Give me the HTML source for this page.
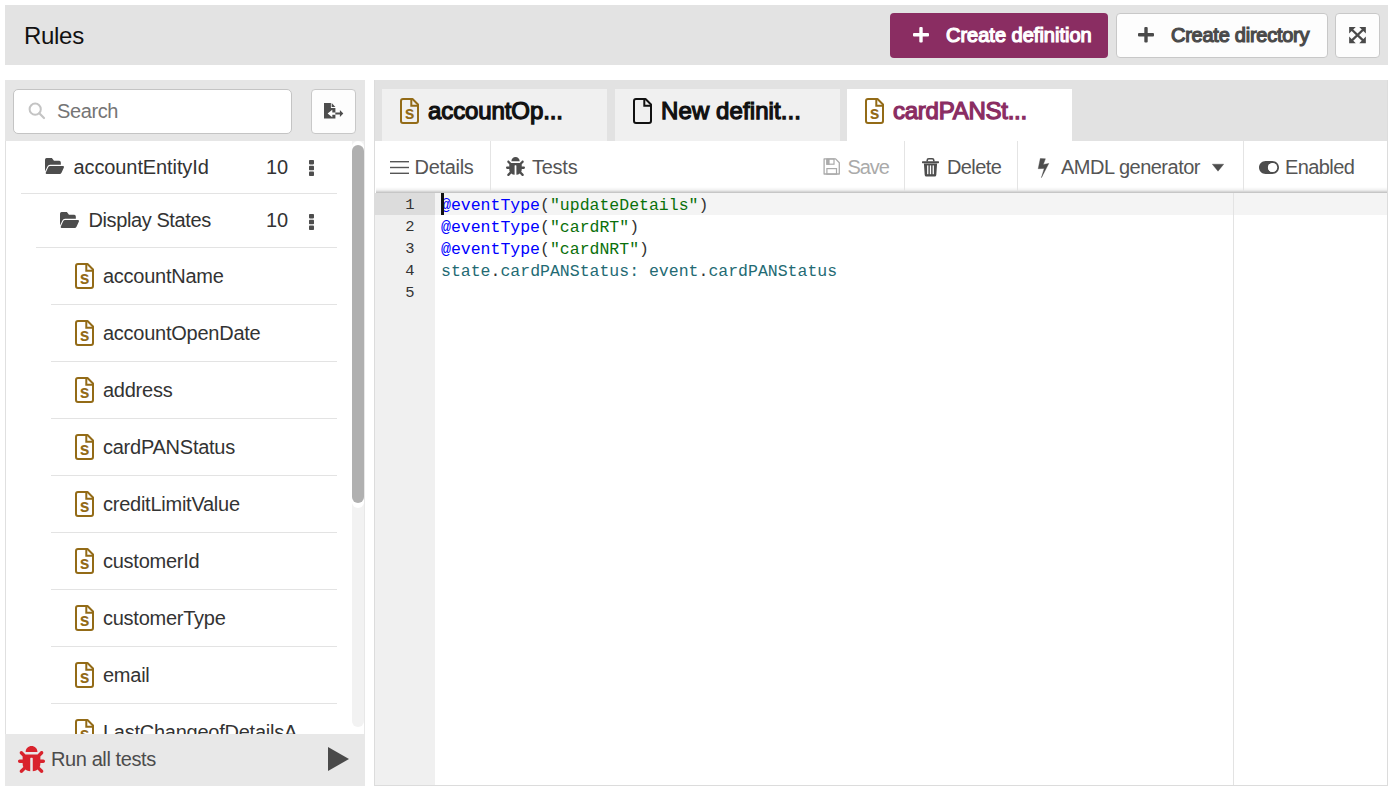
<!DOCTYPE html>
<html><head><meta charset="utf-8">
<style>
*{box-sizing:border-box;margin:0;padding:0}
html,body{width:1389px;height:786px;overflow:hidden;background:#fff;font-family:"Liberation Sans",sans-serif;position:relative}
.a{position:absolute}
.t{position:absolute;line-height:1;white-space:nowrap}
svg{position:absolute;display:block;overflow:visible}
</style></head><body>
<div class="a" style="left:5px;top:5px;width:1383px;height:60px;background:#e3e3e3;"></div>
<div class="t" style="left:24px;top:23.68px;font-size:24px;color:#111;letter-spacing:-0.3px">Rules</div>
<div class="a" style="left:890px;top:13px;width:218px;height:45px;background:#8a2d62;border-radius:4px"></div>
<svg style="left:912.8px;top:26.6px" width="16" height="15.6" viewBox="0 0 16 15.6"><rect x="6.3" y="0" width="3.4" height="15.6" rx="1" fill="#fff"/><rect x="0" y="6.1" width="16" height="3.4" rx="1" fill="#fff"/></svg>
<div class="t" style="left:946px;top:25.07px;font-size:20px;color:#fff;-webkit-text-stroke:1.2px #fff;letter-spacing:0px">Create definition</div>
<div class="a" style="left:1116px;top:13px;width:212px;height:45px;background:#fdfdfd;border:1px solid #c8c8c8;border-radius:4px"></div>
<svg style="left:1138px;top:26.6px" width="16" height="15.6" viewBox="0 0 16 15.6"><rect x="6.3" y="0" width="3.4" height="15.6" rx="1" fill="#4a4a4a"/><rect x="0" y="6.1" width="16" height="3.4" rx="1" fill="#4a4a4a"/></svg>
<div class="t" style="left:1171px;top:25.07px;font-size:20px;color:#4a4a4a;-webkit-text-stroke:1.2px #4a4a4a;letter-spacing:-0.25px">Create directory</div>
<div class="a" style="left:1335px;top:13px;width:45px;height:45px;background:#fdfdfd;border:1px solid #c8c8c8;border-radius:4px"></div>
<svg style="left:1349.3px;top:26.9px" width="17" height="16.2" viewBox="0 0 16.7 16.2"><path d="M0 0H6.6L0 6.6Z M16.7 0H10.1L16.7 6.6Z M0 16.2H6.6L0 9.6Z M16.7 16.2H10.1L16.7 9.6Z" fill="#4a4a4a"/><path d="M2 2L14.7 14.2M14.7 2L2 14.2" stroke="#4a4a4a" stroke-width="2.3"/></svg>
<div class="a" style="left:5px;top:80px;width:360px;height:706px;background:#e6e6e6;"></div>
<div class="a" style="left:13px;top:89px;width:279px;height:45px;background:#fff;border:1px solid #c4c4c4;border-radius:5px"></div>
<svg style="left:28px;top:102px" width="18" height="18" viewBox="0 0 18 18"><circle cx="7.2" cy="7.2" r="5.6" fill="none" stroke="#c4c4c4" stroke-width="2"/><line x1="11.3" y1="11.3" x2="16" y2="16" stroke="#c4c4c4" stroke-width="2.2" stroke-linecap="round"/></svg>
<div class="t" style="left:57px;top:101.07px;font-size:20px;color:#757575;letter-spacing:-0.4px">Search</div>
<div class="a" style="left:311px;top:89px;width:45px;height:45px;background:#fdfdfd;border:1px solid #c8c8c8;border-radius:4px"></div>
<svg style="left:324px;top:103px" width="20" height="16" viewBox="0 0 20 16"><path d="M0 0H6.9V4.9H11.4V15.4H0Z" fill="#4d4d4d"/><path d="M7.7 0L11.4 3.9H7.7Z" fill="#4d4d4d"/><path d="M3.6 10.5L8.3 6.8V9.4H11.6V11.7H8.3V14.2Z" fill="#fff"/><path d="M11.4 9.6H15.9V6.9L19.3 10.5L15.9 14.1V11.5H11.4Z" fill="#4d4d4d"/></svg>
<div class="a" style="left:5px;top:141px;width:360px;height:593px;background:#fff;border-left:1px solid #e0e0e0;border-right:1px solid #e8e8e8"></div>
<div class="a" style="left:0;top:141px;width:352px;height:593px;overflow:hidden"><div class="a" style="left:0;top:-141px;width:352px;height:900px">
<svg style="left:45px;top:158px" width="19" height="16" viewBox="0 64 576 384" preserveAspectRatio="none"><path fill="#4d4d4d" d="M572.694 292.093L500.27 416.248A63.997 63.997 0 0 1 444.989 448H45.025c-18.523 0-30.064-20.093-20.731-36.093l72.424-124.155A64 64 0 0 1 152 256h399.964c18.523 0 30.064 20.093 20.73 36.093zM152 224h328v-48c0-26.51-21.49-48-48-48H272l-64-64H48C21.49 64 0 85.490 0 112v278.046l69.077-118.418C86.214 242.25 117.989 224 152 224z"/></svg>
<div class="t" style="left:73.5px;top:157.07px;font-size:20px;color:#333;letter-spacing:-0.1px">accountEntityId</div>
<div class="t" style="left:266px;top:157.07px;font-size:20px;color:#333;">10</div>
<svg style="left:309px;top:160px" width="5" height="16" viewBox="0 0 5 16"><rect x="0" y="0" width="5" height="4.4" rx="0.8" fill="#4d4d4d"/><rect x="0" y="5.8" width="5" height="4.4" rx="0.8" fill="#4d4d4d"/><rect x="0" y="11.6" width="5" height="4.4" rx="0.8" fill="#4d4d4d"/></svg>
<div class="a" style="left:21px;top:193px;width:316px;height:1px;background:#e3e3e3;"></div>
<svg style="left:60px;top:212px" width="19" height="16" viewBox="0 64 576 384" preserveAspectRatio="none"><path fill="#4d4d4d" d="M572.694 292.093L500.27 416.248A63.997 63.997 0 0 1 444.989 448H45.025c-18.523 0-30.064-20.093-20.731-36.093l72.424-124.155A64 64 0 0 1 152 256h399.964c18.523 0 30.064 20.093 20.73 36.093zM152 224h328v-48c0-26.51-21.49-48-48-48H272l-64-64H48C21.49 64 0 85.490 0 112v278.046l69.077-118.418C86.214 242.25 117.989 224 152 224z"/></svg>
<div class="t" style="left:88.5px;top:210.07px;font-size:20px;color:#333;letter-spacing:-0.4px">Display States</div>
<div class="t" style="left:266px;top:210.07px;font-size:20px;color:#333;">10</div>
<svg style="left:309px;top:214px" width="5" height="16" viewBox="0 0 5 16"><rect x="0" y="0" width="5" height="4.4" rx="0.8" fill="#4d4d4d"/><rect x="0" y="5.8" width="5" height="4.4" rx="0.8" fill="#4d4d4d"/><rect x="0" y="11.6" width="5" height="4.4" rx="0.8" fill="#4d4d4d"/></svg>
<div class="a" style="left:36px;top:247px;width:301px;height:1px;background:#e3e3e3;"></div>
<svg style="left:75px;top:263px" width="19" height="26" viewBox="0 0 19 26"><path d="M3 1H12.5L18 6.5V23A2 2 0 0 1 16 25H3A2 2 0 0 1 1 23V3A2 2 0 0 1 3 1Z" fill="none" stroke="#936b17" stroke-width="2" stroke-linejoin="round"/><path d="M11.3 1.5V7.7H17.5" fill="none" stroke="#936b17" stroke-width="2"/><text x="9.7" y="21.4" text-anchor="middle" font-family="Liberation Sans" font-size="17.5" font-weight="bold" fill="#936b17">s</text></svg>
<div class="t" style="left:103px;top:266.07px;font-size:20px;color:#333;letter-spacing:-0.25px">accountName</div>
<div class="a" style="left:51px;top:304px;width:286px;height:1px;background:#e3e3e3;"></div>
<svg style="left:75px;top:320px" width="19" height="26" viewBox="0 0 19 26"><path d="M3 1H12.5L18 6.5V23A2 2 0 0 1 16 25H3A2 2 0 0 1 1 23V3A2 2 0 0 1 3 1Z" fill="none" stroke="#936b17" stroke-width="2" stroke-linejoin="round"/><path d="M11.3 1.5V7.7H17.5" fill="none" stroke="#936b17" stroke-width="2"/><text x="9.7" y="21.4" text-anchor="middle" font-family="Liberation Sans" font-size="17.5" font-weight="bold" fill="#936b17">s</text></svg>
<div class="t" style="left:103px;top:323.07px;font-size:20px;color:#333;letter-spacing:-0.25px">accountOpenDate</div>
<div class="a" style="left:51px;top:361px;width:286px;height:1px;background:#e3e3e3;"></div>
<svg style="left:75px;top:377px" width="19" height="26" viewBox="0 0 19 26"><path d="M3 1H12.5L18 6.5V23A2 2 0 0 1 16 25H3A2 2 0 0 1 1 23V3A2 2 0 0 1 3 1Z" fill="none" stroke="#936b17" stroke-width="2" stroke-linejoin="round"/><path d="M11.3 1.5V7.7H17.5" fill="none" stroke="#936b17" stroke-width="2"/><text x="9.7" y="21.4" text-anchor="middle" font-family="Liberation Sans" font-size="17.5" font-weight="bold" fill="#936b17">s</text></svg>
<div class="t" style="left:103px;top:380.07px;font-size:20px;color:#333;letter-spacing:-0.25px">address</div>
<div class="a" style="left:51px;top:418px;width:286px;height:1px;background:#e3e3e3;"></div>
<svg style="left:75px;top:434px" width="19" height="26" viewBox="0 0 19 26"><path d="M3 1H12.5L18 6.5V23A2 2 0 0 1 16 25H3A2 2 0 0 1 1 23V3A2 2 0 0 1 3 1Z" fill="none" stroke="#936b17" stroke-width="2" stroke-linejoin="round"/><path d="M11.3 1.5V7.7H17.5" fill="none" stroke="#936b17" stroke-width="2"/><text x="9.7" y="21.4" text-anchor="middle" font-family="Liberation Sans" font-size="17.5" font-weight="bold" fill="#936b17">s</text></svg>
<div class="t" style="left:103px;top:437.07px;font-size:20px;color:#333;letter-spacing:-0.25px">cardPANStatus</div>
<div class="a" style="left:51px;top:475px;width:286px;height:1px;background:#e3e3e3;"></div>
<svg style="left:75px;top:491px" width="19" height="26" viewBox="0 0 19 26"><path d="M3 1H12.5L18 6.5V23A2 2 0 0 1 16 25H3A2 2 0 0 1 1 23V3A2 2 0 0 1 3 1Z" fill="none" stroke="#936b17" stroke-width="2" stroke-linejoin="round"/><path d="M11.3 1.5V7.7H17.5" fill="none" stroke="#936b17" stroke-width="2"/><text x="9.7" y="21.4" text-anchor="middle" font-family="Liberation Sans" font-size="17.5" font-weight="bold" fill="#936b17">s</text></svg>
<div class="t" style="left:103px;top:494.07px;font-size:20px;color:#333;letter-spacing:-0.25px">creditLimitValue</div>
<div class="a" style="left:51px;top:532px;width:286px;height:1px;background:#e3e3e3;"></div>
<svg style="left:75px;top:548px" width="19" height="26" viewBox="0 0 19 26"><path d="M3 1H12.5L18 6.5V23A2 2 0 0 1 16 25H3A2 2 0 0 1 1 23V3A2 2 0 0 1 3 1Z" fill="none" stroke="#936b17" stroke-width="2" stroke-linejoin="round"/><path d="M11.3 1.5V7.7H17.5" fill="none" stroke="#936b17" stroke-width="2"/><text x="9.7" y="21.4" text-anchor="middle" font-family="Liberation Sans" font-size="17.5" font-weight="bold" fill="#936b17">s</text></svg>
<div class="t" style="left:103px;top:551.07px;font-size:20px;color:#333;letter-spacing:-0.25px">customerId</div>
<div class="a" style="left:51px;top:589px;width:286px;height:1px;background:#e3e3e3;"></div>
<svg style="left:75px;top:605px" width="19" height="26" viewBox="0 0 19 26"><path d="M3 1H12.5L18 6.5V23A2 2 0 0 1 16 25H3A2 2 0 0 1 1 23V3A2 2 0 0 1 3 1Z" fill="none" stroke="#936b17" stroke-width="2" stroke-linejoin="round"/><path d="M11.3 1.5V7.7H17.5" fill="none" stroke="#936b17" stroke-width="2"/><text x="9.7" y="21.4" text-anchor="middle" font-family="Liberation Sans" font-size="17.5" font-weight="bold" fill="#936b17">s</text></svg>
<div class="t" style="left:103px;top:608.07px;font-size:20px;color:#333;letter-spacing:-0.25px">customerType</div>
<div class="a" style="left:51px;top:646px;width:286px;height:1px;background:#e3e3e3;"></div>
<svg style="left:75px;top:662px" width="19" height="26" viewBox="0 0 19 26"><path d="M3 1H12.5L18 6.5V23A2 2 0 0 1 16 25H3A2 2 0 0 1 1 23V3A2 2 0 0 1 3 1Z" fill="none" stroke="#936b17" stroke-width="2" stroke-linejoin="round"/><path d="M11.3 1.5V7.7H17.5" fill="none" stroke="#936b17" stroke-width="2"/><text x="9.7" y="21.4" text-anchor="middle" font-family="Liberation Sans" font-size="17.5" font-weight="bold" fill="#936b17">s</text></svg>
<div class="t" style="left:103px;top:665.07px;font-size:20px;color:#333;letter-spacing:-0.25px">email</div>
<div class="a" style="left:51px;top:703px;width:286px;height:1px;background:#e3e3e3;"></div>
<svg style="left:75px;top:719px" width="19" height="26" viewBox="0 0 19 26"><path d="M3 1H12.5L18 6.5V23A2 2 0 0 1 16 25H3A2 2 0 0 1 1 23V3A2 2 0 0 1 3 1Z" fill="none" stroke="#936b17" stroke-width="2" stroke-linejoin="round"/><path d="M11.3 1.5V7.7H17.5" fill="none" stroke="#936b17" stroke-width="2"/><text x="9.7" y="21.4" text-anchor="middle" font-family="Liberation Sans" font-size="17.5" font-weight="bold" fill="#936b17">s</text></svg>
<div class="t" style="left:103px;top:722.07px;font-size:20px;color:#333;letter-spacing:-0.25px">LastChangeofDetailsA</div>
<div class="a" style="left:51px;top:760px;width:286px;height:1px;background:#e3e3e3;"></div>
</div></div>
<div class="a" style="left:352px;top:141px;width:12px;height:586px;background:#f2f2f2;border-radius:0 0 6px 6px"></div>
<div class="a" style="left:352px;top:141px;width:12px;height:367px;background:#fff;border-radius:6px"></div>
<div class="a" style="left:352px;top:145px;width:12px;height:358px;background:#b0b0b0;border-radius:6px"></div>
<div class="a" style="left:5px;top:734px;width:360px;height:52px;background:#e8e8e8;"></div>
<svg style="left:18px;top:746px" width="27" height="27" viewBox="0 0 512 512" preserveAspectRatio="none"><path fill="#d9232d" d="M511.988 288.9c-.478 17.43-15.217 31.1-32.653 31.1H424v16c0 21.864-4.882 42.584-13.6 61.145l60.228 60.228c12.496 12.497 12.496 32.758 0 45.255-12.498 12.497-32.759 12.496-45.256 0l-54.736-54.736C345.886 467.965 314.351 480 280 480V236c0-6.627-5.373-12-12-12h-24c-6.627 0-12 5.373-12 12v244c-34.351 0-65.886-12.035-90.636-32.108l-54.736 54.736c-12.498 12.497-32.759 12.496-45.256 0-12.496-12.497-12.496-32.758 0-45.255l60.228-60.228C92.882 378.584 88 357.864 88 336v-16H32.666C15.23 320 .491 306.33.013 288.9-.484 270.816 14.028 256 32 256h56v-58.745l-46.628-46.628c-12.496-12.497-12.496-32.758 0-45.255 12.498-12.497 32.758-12.497 45.256 0L141.255 160h229.489l54.627-54.627c12.498-12.497 32.758-12.497 45.256 0 12.496 12.497 12.496 32.758 0 45.255L424 197.255V256h56c17.972 0 32.484 14.816 31.988 32.9zM257 0c-61.856 0-112 50.144-112 112h224C369 50.144 318.856 0 257 0z"/></svg>
<div class="t" style="left:51px;top:749.07px;font-size:20px;color:#4c4c4c;letter-spacing:-0.4px">Run all tests</div>
<svg style="left:328px;top:747px" width="21" height="24" viewBox="0 0 21 24"><path d="M0 0L21 12L0 24Z" fill="#4a4a4a"/></svg>
<div class="a" style="left:374px;top:80px;width:1014px;height:706px;background:#fff;border:1px solid #dcdcdc"></div>
<div class="a" style="left:375px;top:80px;width:1012px;height:61px;background:#e2e2e2;"></div>
<div class="a" style="left:382px;top:89px;width:225px;height:52px;background:#f0f0f0;"></div>
<svg style="left:400px;top:98px" width="19" height="26" viewBox="0 0 19 26"><path d="M3 1H12.5L18 6.5V23A2 2 0 0 1 16 25H3A2 2 0 0 1 1 23V3A2 2 0 0 1 3 1Z" fill="none" stroke="#936b17" stroke-width="2" stroke-linejoin="round"/><path d="M11.3 1.5V7.7H17.5" fill="none" stroke="#936b17" stroke-width="2"/><text x="9.7" y="21.4" text-anchor="middle" font-family="Liberation Sans" font-size="17.5" font-weight="bold" fill="#936b17">s</text></svg>
<div class="t" style="left:428px;top:98.68px;font-size:24px;color:#111;-webkit-text-stroke:1.25px #111;letter-spacing:-0.1px">accountOp...</div>
<div class="a" style="left:615px;top:89px;width:225px;height:52px;background:#f0f0f0;"></div>
<svg style="left:633px;top:98px" width="19" height="26" viewBox="0 0 19 26"><path d="M3 1H12.5L18 6.5V23A2 2 0 0 1 16 25H3A2 2 0 0 1 1 23V3A2 2 0 0 1 3 1Z" fill="none" stroke="#111" stroke-width="2" stroke-linejoin="round"/><path d="M11.3 1.5V7.7H17.5" fill="none" stroke="#111" stroke-width="2"/></svg>
<div class="t" style="left:661px;top:98.68px;font-size:24px;color:#111;-webkit-text-stroke:1.25px #111;letter-spacing:0.1px">New definit...</div>
<div class="a" style="left:847px;top:89px;width:225px;height:52px;background:#fff;"></div>
<svg style="left:865px;top:98px" width="19" height="26" viewBox="0 0 19 26"><path d="M3 1H12.5L18 6.5V23A2 2 0 0 1 16 25H3A2 2 0 0 1 1 23V3A2 2 0 0 1 3 1Z" fill="none" stroke="#936b17" stroke-width="2" stroke-linejoin="round"/><path d="M11.3 1.5V7.7H17.5" fill="none" stroke="#936b17" stroke-width="2"/><text x="9.7" y="21.4" text-anchor="middle" font-family="Liberation Sans" font-size="17.5" font-weight="bold" fill="#936b17">s</text></svg>
<div class="t" style="left:893px;top:98.68px;font-size:24px;color:#8a2d62;-webkit-text-stroke:1.25px #8a2d62;letter-spacing:-0.25px">cardPANSt...</div>
<div class="a" style="left:375px;top:141px;width:1012px;height:50px;background:#fff;"></div>
<div class="a" style="left:376px;top:187px;width:1011px;height:6px;background:linear-gradient(rgba(0,0,0,0),rgba(0,0,0,0.06) 50%,rgba(0,0,0,0.26));"></div>
<svg style="left:390px;top:161px" width="19" height="13" viewBox="0 0 19 13"><rect y="0" width="19" height="1.4" fill="#555"/><rect y="5.8" width="19" height="1.4" fill="#555"/><rect y="11.6" width="19" height="1.4" fill="#555"/></svg>
<div class="t" style="left:414.5px;top:157.07px;font-size:20px;color:#555;letter-spacing:-0.3px">Details</div>
<div class="a" style="left:490px;top:141px;width:1px;height:50px;background:#e4e4e4;"></div>
<svg style="left:506px;top:157px" width="19" height="19" viewBox="0 0 512 512" preserveAspectRatio="none"><path fill="#4d4d4d" d="M511.988 288.9c-.478 17.43-15.217 31.1-32.653 31.1H424v16c0 21.864-4.882 42.584-13.6 61.145l60.228 60.228c12.496 12.497 12.496 32.758 0 45.255-12.498 12.497-32.759 12.496-45.256 0l-54.736-54.736C345.886 467.965 314.351 480 280 480V236c0-6.627-5.373-12-12-12h-24c-6.627 0-12 5.373-12 12v244c-34.351 0-65.886-12.035-90.636-32.108l-54.736 54.736c-12.498 12.497-32.759 12.496-45.256 0-12.496-12.497-12.496-32.758 0-45.255l60.228-60.228C92.882 378.584 88 357.864 88 336v-16H32.666C15.23 320 .491 306.33.013 288.9-.484 270.816 14.028 256 32 256h56v-58.745l-46.628-46.628c-12.496-12.497-12.496-32.758 0-45.255 12.498-12.497 32.758-12.497 45.256 0L141.255 160h229.489l54.627-54.627c12.498-12.497 32.758-12.497 45.256 0 12.496 12.497 12.496 32.758 0 45.255L424 197.255V256h56c17.972 0 32.484 14.816 31.988 32.9zM257 0c-61.856 0-112 50.144-112 112h224C369 50.144 318.856 0 257 0z"/></svg>
<div class="t" style="left:532px;top:157.07px;font-size:20px;color:#555;letter-spacing:-0.25px">Tests</div>
<svg style="left:823px;top:158px" width="17" height="17" viewBox="0 0 17 17"><path d="M1.1 0.9H12.6L16.3 4.7V16H1.1Z" fill="none" stroke="#aaa" stroke-width="1.3" stroke-linejoin="round"/><rect x="3.9" y="1" width="7.1" height="5.2" fill="none" stroke="#aaa" stroke-width="1.2"/><rect x="3.3" y="1" width="3.3" height="5.8" fill="#aaa"/><rect x="3.9" y="10.6" width="9.6" height="5.6" fill="none" stroke="#aaa" stroke-width="1.2"/></svg>
<div class="t" style="left:847.5px;top:157.07px;font-size:20px;color:#aaa;letter-spacing:-1.1px">Save</div>
<div class="a" style="left:904px;top:141px;width:1px;height:50px;background:#e4e4e4;"></div>
<svg style="left:922px;top:158px" width="17" height="19" viewBox="0 0 17 19"><path d="M5.2 3.6V2.4A1.6 1.6 0 0 1 6.8 0.8H10.2A1.6 1.6 0 0 1 11.8 2.4V3.6" fill="none" stroke="#4d4d4d" stroke-width="1.6"/><rect x="0" y="3.3" width="17" height="1.9" rx="0.6" fill="#4d4d4d"/><path d="M1.9 5.6H15.1L14.3 17.1A1.6 1.6 0 0 1 12.7 18.6H4.3A1.6 1.6 0 0 1 2.7 17.1Z" fill="#4d4d4d"/><rect x="5.1" y="7.4" width="1.3" height="8.8" fill="#fff"/><rect x="7.85" y="7.4" width="1.3" height="8.8" fill="#fff"/><rect x="10.6" y="7.4" width="1.3" height="8.8" fill="#fff"/></svg>
<div class="t" style="left:947px;top:157.07px;font-size:20px;color:#555;letter-spacing:-0.6px">Delete</div>
<div class="a" style="left:1017px;top:141px;width:1px;height:50px;background:#e4e4e4;"></div>
<svg style="left:1038px;top:158px" width="11" height="20" viewBox="0 0 11 20"><path d="M2.3 0.5L7.4 0.8L5.3 6.5L10.8 5.4L3.4 19.7L6.2 10.5L0.2 10.7Z" fill="#4d4d4d" stroke="#4d4d4d" stroke-width="0.4" stroke-linejoin="round"/></svg>
<div class="t" style="left:1061px;top:157.07px;font-size:20px;color:#555;letter-spacing:-0.5px">AMDL generator</div>
<svg style="left:1211.6px;top:164.2px" width="12" height="7.4" viewBox="0 0 12 7.4"><path d="M0.3 0.2H11.7L6 7.2Z" fill="#4d4d4d" stroke="#4d4d4d" stroke-width="0.4" stroke-linejoin="round"/></svg>
<div class="a" style="left:1243px;top:141px;width:1px;height:50px;background:#e4e4e4;"></div>
<svg style="left:1259px;top:161px" width="20" height="13" viewBox="0 64 576 384" preserveAspectRatio="none"><path fill="#4d4d4d" d="M384 64H192C86 64 0 150 0 256s86 192 192 192h192c106 0 192-86 192-192S490 64 384 64zm0 320c-70.8 0-128-57.3-128-128 0-70.8 57.3-128 128-128 70.8 0 128 57.3 128 128 0 70.8-57.3 128-128 128z"/></svg>
<svg style="left:1259px;top:161px" width="20" height="13" viewBox="0 0 20 13"><circle cx="13.6" cy="6.5" r="4.6" fill="#fff"/></svg>
<div class="t" style="left:1285px;top:157.07px;font-size:20px;color:#555;letter-spacing:-0.6px">Enabled</div>
<div class="a" style="left:375px;top:193px;width:60px;height:592px;background:#f0f0f0;"></div>
<div class="a" style="left:375px;top:193px;width:60px;height:22px;background:#dcdcdc;"></div>
<div class="a" style="left:435px;top:193px;width:952px;height:22px;background:#f4f4f4;"></div>
<div class="a" style="left:1233px;top:193px;width:1px;height:592px;background:#e3e3e3;"></div>
<div class="t" style="left:375px;width:39.5px;text-align:right;top:198.13px;font-size:15.5px;font-family:'Liberation Mono',monospace;color:#333">1</div>
<div class="t" style="left:375px;width:39.5px;text-align:right;top:220.13px;font-size:15.5px;font-family:'Liberation Mono',monospace;color:#333">2</div>
<div class="t" style="left:375px;width:39.5px;text-align:right;top:242.13px;font-size:15.5px;font-family:'Liberation Mono',monospace;color:#333">3</div>
<div class="t" style="left:375px;width:39.5px;text-align:right;top:264.13px;font-size:15.5px;font-family:'Liberation Mono',monospace;color:#333">4</div>
<div class="t" style="left:375px;width:39.5px;text-align:right;top:286.13px;font-size:15.5px;font-family:'Liberation Mono',monospace;color:#333">5</div>
<div class="t" style="left:441px;top:198.36px;font-size:16.5px;font-family:'Liberation Mono',monospace;"><span style="color:#0000ff">@eventType</span><span style="color:#333">(</span><span style="color:#0a700a">"updateDetails"</span><span style="color:#333">)</span></div>
<div class="t" style="left:441px;top:220.36px;font-size:16.5px;font-family:'Liberation Mono',monospace;"><span style="color:#0000ff">@eventType</span><span style="color:#333">(</span><span style="color:#0a700a">"cardRT"</span><span style="color:#333">)</span></div>
<div class="t" style="left:441px;top:242.36px;font-size:16.5px;font-family:'Liberation Mono',monospace;"><span style="color:#0000ff">@eventType</span><span style="color:#333">(</span><span style="color:#0a700a">"cardNRT"</span><span style="color:#333">)</span></div>
<div class="t" style="left:441px;top:264.36px;font-size:16.5px;font-family:'Liberation Mono',monospace;"><span style="color:#236a73">state</span><span style="color:#333">.</span><span style="color:#236a73">cardPANStatus: event</span><span style="color:#333">.</span><span style="color:#236a73">cardPANStatus</span></div>
<div class="a" style="left:441px;top:193px;width:3px;height:22px;background:#111;"></div>
</body></html>
